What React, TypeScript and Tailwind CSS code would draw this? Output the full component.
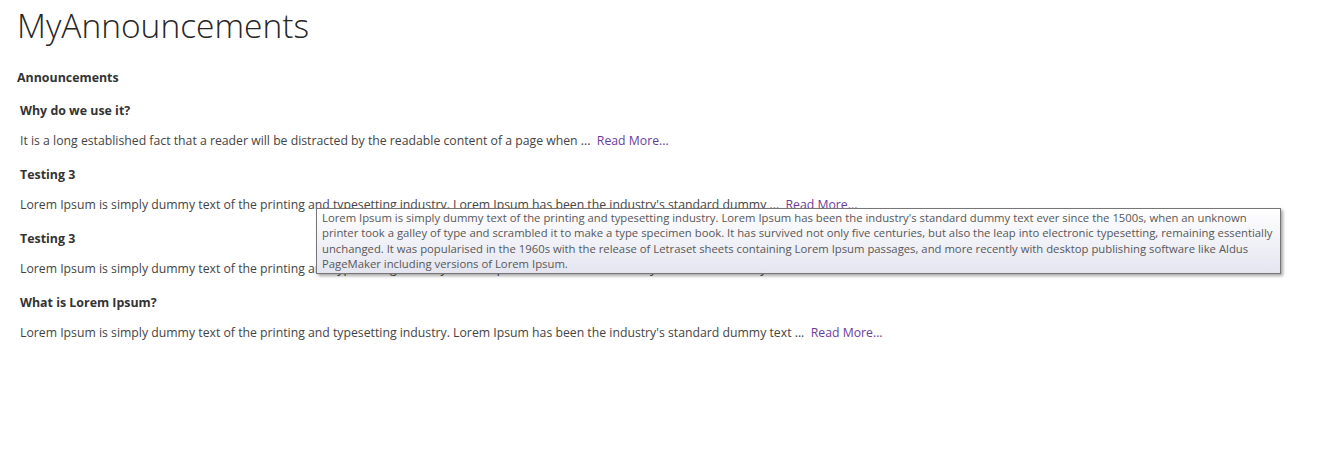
const items = [
  {
    title: 'Why do we use it?',
    text: 'It is a long established fact that a reader will be distracted by the readable content of a page when ...',
  },
  {
    title: 'Testing 3',
    text: "Lorem Ipsum is simply dummy text of the printing and typesetting industry. Lorem Ipsum has been the industry's standard dummy ...",
  },
  {
    title: 'Testing 3',
    text: "Lorem Ipsum is simply dummy text of the printing and typesetting industry. Lorem Ipsum has been the industry's standard dummy ...",
  },
  {
    title: 'What is Lorem Ipsum?',
    text: "Lorem Ipsum is simply dummy text of the printing and typesetting industry. Lorem Ipsum has been the industry's standard dummy text ...",
  },
]

const tip =
  "Lorem Ipsum is simply dummy text of the printing and typesetting industry. Lorem Ipsum has been the industry's standard dummy text ever since the 1500s, when an unknown printer took a galley of type and scrambled it to make a type specimen book. It has survived not only five centuries, but also the leap into electronic typesetting, remaining essentially unchanged. It was popularised in the 1960s with the release of Letraset sheets containing Lorem Ipsum passages, and more recently with desktop publishing software like Aldus PageMaker including versions of Lorem Ipsum."

export default function App() {
  return (
    <div className="relative w-[1329px] h-[451px] bg-white text-[#444] font-['Open_Sans',sans-serif]">
      <h1 className="pl-[17px] pt-[3px] text-[33.5px] leading-[44px] font-light text-[#262626]">MyAnnouncements</h1>
      <div className="pl-[17px] pt-[22px] text-[12.4px] font-bold leading-[18px] text-[#333]">Announcements</div>
      <div className="pl-[20px] pt-[6px]">
        {items.map((it, i) => (
          <div key={i}>
            <div className="pt-[8px] pb-[2px] text-[12.4px] font-bold leading-[20px] text-[#333]">{it.title}</div>
            <p className="pt-[8px] pb-[6px] text-[12.25px] leading-[20px]">
              {it.text}&nbsp;{' '}
              <a className="text-[#6a3d9a]">Read More...</a>
            </p>
          </div>
        ))}
      </div>
      <div className="absolute left-[316px] top-[208px] w-[965px] border border-[#767676] bg-linear-to-b from-white to-[#e4e5f0] px-[5px] pt-[1px] pb-[2px] text-[11.3px] leading-[15.3px] text-[#575757] shadow-[2px_2px_3px_rgba(0,0,0,0.35)]">
        {tip}
      </div>
    </div>
  )
}
